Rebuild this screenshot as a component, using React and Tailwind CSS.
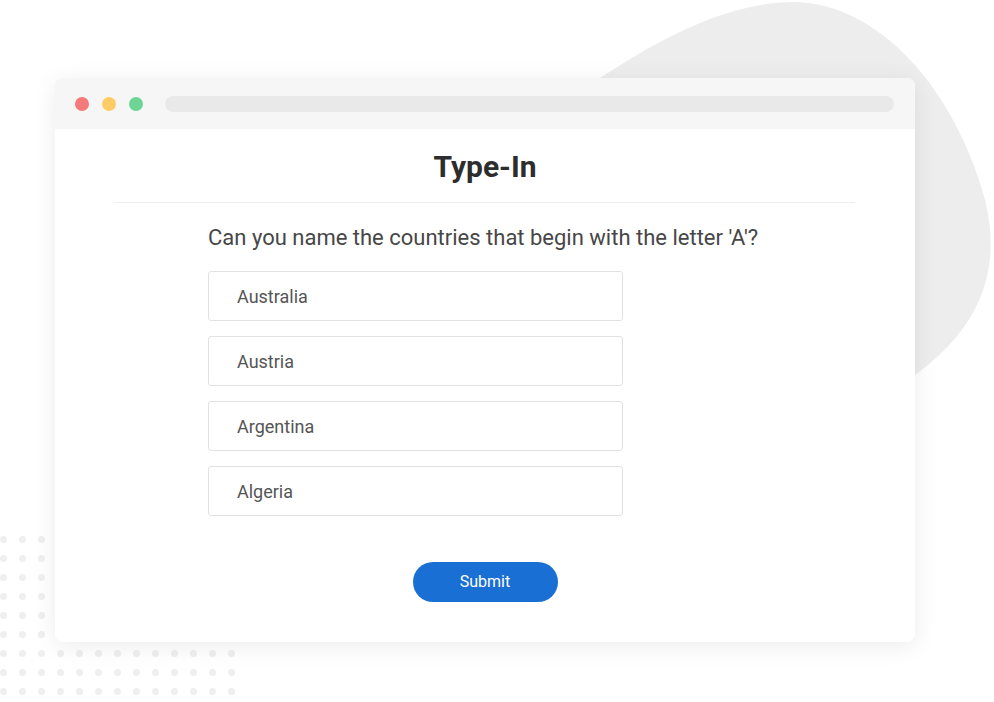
import React from 'react';

const answers = ['Australia', 'Austria', 'Argentina', 'Algeria'];

function DotGrid() {
  const dots = [];
  for (let r = 0; r < 9; r++) {
    for (let c = 0; c < 13; c++) {
      dots.push(<span key={r + '-' + c} className="w-[7px] h-[7px] rounded-full bg-[#efefef]" />);
    }
  }
  return (
    <div className="absolute left-0 top-[536px] grid grid-cols-[repeat(13,7px)] gap-x-[12px] gap-y-[12px]">
      {dots}
    </div>
  );
}

export default function App() {
  return (
    <div className="relative w-[994px] h-[702px] overflow-hidden bg-white" style={{ fontFamily: 'Roboto, "Liberation Sans", sans-serif' }}>
      {/* background blob */}
      <svg className="absolute left-0 top-0" width="994" height="702" viewBox="0 0 994 702">
        <path
          d="M600 78 C680 25 740 2 795 2 C880 4 955 90 985 200 C1005 280 970 335 915 375 L840 420 L600 420 Z"
          fill="#ededed"
        />
      </svg>
      <DotGrid />

      <div className="relative ml-[55px] pt-[78px] w-[860px]">
        <div className="h-[564px] rounded-[8px] bg-white overflow-hidden shadow-[0_4px_24px_rgba(0,0,0,0.08)]">
          <div className="h-[51px] bg-[#f6f6f6] flex items-center pl-[20px] pr-[21px]">
            <span className="w-[14px] h-[14px] rounded-full bg-[#f47a7a]" />
            <span className="w-[14px] h-[14px] rounded-full bg-[#fecc66] ml-[13px]" />
            <span className="w-[14px] h-[14px] rounded-full bg-[#6cd594] ml-[13px]" />
            <div className="flex-1 h-[16px] rounded-full bg-[#e9e9e9] ml-[22px]" />
          </div>

          <h1 className="mt-[20px] text-center text-[30px] leading-[36px] font-bold text-[#2d2d2d]">Type-In</h1>
          <div className="mx-[60px] mt-[17px] h-px bg-[#eeeeee]" />

          <div className="ml-[153px]">
            <p className="mt-[21px] text-[22px] leading-[28px] text-[#474747]">
              Can you name the countries that begin with the letter 'A'?
            </p>
            <div className="mt-[19px] flex flex-col gap-[15px] w-[415px]">
              {answers.map((a) => (
                <div key={a} className="h-[50px] flex items-center pl-[28px] border border-[#e2e2e2] rounded-[3px] text-[18px] text-[#555555]">
                  {a}
                </div>
              ))}
            </div>
          </div>

          <div className="mt-[46px] flex justify-center">
            <button className="w-[145px] h-[40px] rounded-full bg-[#1a6fd4] text-white text-[16px]">
              Submit
            </button>
          </div>
        </div>
      </div>
    </div>
  );
}
